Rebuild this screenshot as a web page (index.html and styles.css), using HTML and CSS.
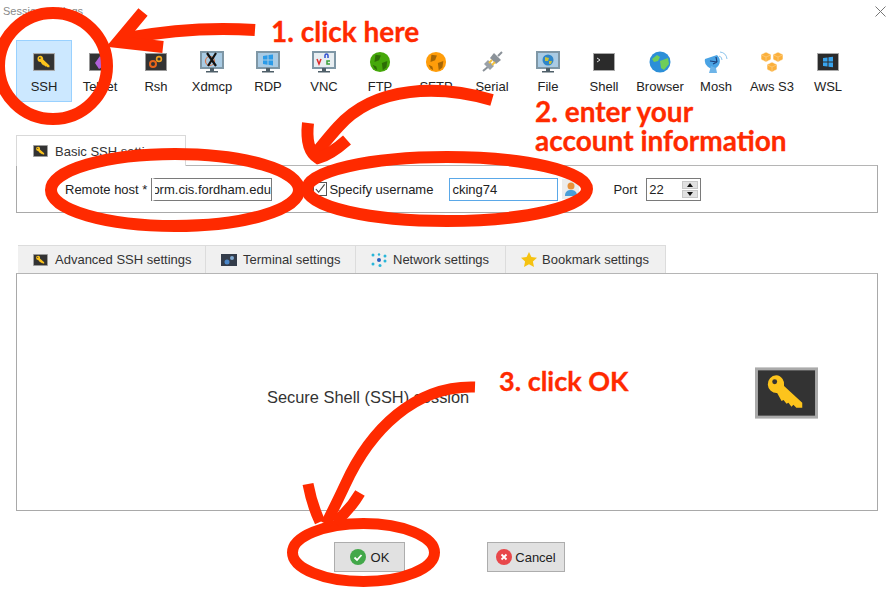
FILE: index.html
```html
<!DOCTYPE html>
<html lang="en">
<head>
    <meta charset="UTF-8">
    <title>Session settings</title>
    <link rel="stylesheet" href="styles.css">
</head>
<body>
    <svg class="defs" width="0" height="0">
        <symbol id="ic-key" viewBox="0 0 64 52">
            <rect x="1.500" y="1.500" width="61" height="49" fill="#333" stroke="#aaa" stroke-width="3"/>
            <path d="M21.500 8a9 9 0 018 11l18.500 17v5h-6l-3-3-2 2-3-4-2 1-3-4-2 1-4.500-8a9 9 0 01-1-18z" fill="#fdc41c"/>
            <circle cx="20" cy="14.500" r="2.500" fill="#333"/>
        </symbol>
        <symbol id="ic-monitor" viewBox="0 0 24 24">
            <rect x="1" y="2" width="22" height="16" fill="#a9cbe4" stroke="#7f97a6" stroke-width="2"/>
            <path d="M10 18h4v3h-4zM6 21h12v1.500H6z" fill="#4f5f69"/>
        </symbol>
        <symbol id="ic-globe" viewBox="0 0 24 24">
            <circle cx="12" cy="12" r="11"/>
            <path d="M7 4l6 1-2 5-5 2zM14 13l6-2-1 7-4 3zM4 15l4 2 1 4-3-2z" fill="#000" opacity=".35"/>
        </symbol>
    </svg>

    <div class="dialog">
        <div class="titlebar">
            <span class="title">Session settings</span>
            <svg class="close" width="11" height="11" viewBox="0 0 11 11"><path d="M.5.5l10 10M10.500.5l-10 10" stroke="#777" fill="none"/></svg>
        </div>

        <div class="toolbar">
            <div class="tool active">
                <svg width="22" height="18"><use href="#ic-key"/></svg>
                <span>SSH</span>
            </div>
            <div class="tool">
                <svg width="22" height="18" viewBox="0 0 22 18"><rect x=".5" y=".5" width="21" height="17" fill="#333" stroke="#999"/><path d="M6 10l5-7 4 3v7l-5 3z" fill="#b060d8"/></svg>
                <span>Telnet</span>
            </div>
            <div class="tool">
                <svg width="22" height="18" viewBox="0 0 22 18"><rect x=".5" y=".5" width="21" height="17" fill="#333" stroke="#999"/><circle cx="8" cy="11" r="3" fill="none" stroke="#e8641c" stroke-width="2"/><circle cx="14" cy="6" r="2.400" fill="none" stroke="#f0a020" stroke-width="1.600"/></svg>
                <span>Rsh</span>
            </div>
            <div class="tool">
                <svg width="24" height="24"><use href="#ic-monitor"/><circle cx="10" cy="11" r="4.500" fill="none" stroke="#d9764a" stroke-width="1.200"/><path d="M7 3l9 13M16 3L8 16" stroke="#111" stroke-width="2.200"/></svg>
                <span>Xdmcp</span>
            </div>
            <div class="tool">
                <svg width="24" height="24"><use href="#ic-monitor"/><path d="M7 6l4.500-.7v4.200H7zM12.500 5.100L17 4.500v5h-4.500zM7 10.500h4.500v4.200L7 14zM12.500 10.500H17v5l-4.500-.7z" fill="#2b9be8"/></svg>
                <span>RDP</span>
            </div>
            <div class="tool">
                <svg width="24" height="24"><use href="#ic-monitor"/><rect x="2" y="3" width="20" height="14" fill="#e8eef2"/><path d="M5 9l2 5 2-5" fill="none" stroke="#e02a2a" stroke-width="1.500"/><path d="M18 11h-3v3h3" fill="none" stroke="#3aa03a" stroke-width="1.500"/><path d="M13 8V5.500a1.500 1.500 0 013 0V8" fill="none" stroke="#3050d0" stroke-width="1.500"/></svg>
                <span>VNC</span>
            </div>
            <div class="tool">
                <svg class="green" width="22" height="22"><use href="#ic-globe"/></svg>
                <span>FTP</span>
            </div>
            <div class="tool">
                <svg class="orange" width="22" height="22"><use href="#ic-globe"/></svg>
                <span>SFTP</span>
            </div>
            <div class="tool">
                <svg width="24" height="24" viewBox="0 0 24 24"><path d="M14 3l7 7-5 4-6-6z" fill="#8b9299"/><path d="M3 21l6-5M18 6l4-4" stroke="#8b9299" stroke-width="2"/><path d="M4 14l6 6 4-4-6-6z" fill="#9aa1a8"/><path d="M9 13l3-3M12 15l3-3" stroke="#f3c13a" stroke-width="2"/></svg>
                <span>Serial</span>
            </div>
            <div class="tool">
                <svg width="24" height="24"><use href="#ic-monitor"/><circle cx="12" cy="10" r="5.500" fill="#2f86c9"/><path d="M9 7l4 1-1 3-3 0zM13 11l3 0-1 3-2 0z" fill="#c9c23a"/></svg>
                <span>File</span>
            </div>
            <div class="tool">
                <svg width="22" height="18" viewBox="0 0 22 18"><rect x=".5" y=".5" width="21" height="17" fill="#2b2b2b" stroke="#aaa"/><path d="M4 5l3 2-3 2" fill="none" stroke="#ddd"/></svg>
                <span>Shell</span>
            </div>
            <div class="tool">
                <svg width="22" height="22" viewBox="0 0 22 22"><circle cx="11" cy="11" r="10.500" fill="#2c8fd8"/><path d="M3 8l5-4 3 2-2 4-4 1zM11 10l8-3 1 6-5 6-3-2z" fill="#6fce5a"/></svg>
                <span>Browser</span>
            </div>
            <div class="tool">
                <svg width="24" height="24" viewBox="0 0 24 24"><path d="M1 9L13 5a8 8 0 01-1 13 8 8 0 01-11-9z" fill="#4aa3e4"/><path d="M5 23l2-7 5 2 1 5z" fill="#6db4e8"/><path d="M6 11l7 1M13 12l-1-5M9 14l4-2" stroke="#1d3f7a" stroke-width="1.200" fill="none"/><path d="M15 6a4 4 0 013 4M16 2a8 8 0 017 7" stroke="#8cc4ec" fill="none"/></svg>
                <span>Mosh</span>
            </div>
            <div class="tool">
                <svg width="24" height="22" viewBox="0 0 24 22"><path d="M6 1l5 2.500v5L6 11 1 8.500v-5zM18 1l5 2.500v5L18 11l-5-2.500v-5zM12 11l5 2.500v5L12 21l-5-2.500v-5z" fill="#fbb03b" stroke="#fff" stroke-width=".6"/><path d="M1.500 4L6 6l4.500-2M13.500 4L18 6l4.500-2M7.500 14l4.500 2 4.500-2M6 6v5M18 6v5M12 16v5" stroke="#fdd08a" stroke-width=".7" fill="none"/></svg>
                <span>Aws S3</span>
            </div>
            <div class="tool">
                <svg width="22" height="18" viewBox="0 0 22 18"><rect x=".5" y=".5" width="21" height="17" fill="#2b2b2b" stroke="#aaa"/><path d="M6 5l4.500-.6v4H6zM11.500 4.300L16 3.700v4.700h-4.500zM6 9.500h4.500v4L6 13zM11.500 9.500H16v4.800l-4.500-.6z" fill="#38a3ec"/></svg>
                <span>WSL</span>
            </div>
        </div>

        <div class="tabs first-tabs">
            <div class="tab current">
                <svg width="15" height="12"><use href="#ic-key"/></svg>
                Basic SSH settings
            </div>
        </div>
        <div class="panel basic">
            <label class="host-label">Remote host *</label>
            <div class="field host">orm.cis.fordham.edu</div>
            <span class="check"><svg width="12" height="12" viewBox="0 0 13 13"><path d="M2 6.500l3 3.500L11.500 1.500" fill="none" stroke="#444" stroke-width="1.200"/></svg></span>
            <label class="user-label">Specify username</label>
            <div class="field user">cking74</div>
            <svg class="user-icon" width="17" height="20" viewBox="0 0 17 20"><rect width="17" height="20" fill="#ececec"/><circle cx="9" cy="7" r="3.500" fill="#e8913a"/><path d="M3 17c0-5 3-6 6-6s6 1 6 6z" fill="#4a9ed8"/></svg>
            <label class="port-label">Port</label>
            <div class="field port">
                22
                <div class="spin">
                    <span class="up"></span>
                    <span class="down"></span>
                </div>
            </div>
        </div>

        <div class="tabs second-tabs">
            <div class="tab w-adv">
                <svg width="15" height="12"><use href="#ic-key"/></svg>
                Advanced SSH settings
            </div>
            <div class="tab w-term">
                <svg width="16" height="12" viewBox="0 0 16 12"><rect width="16" height="12" fill="#333c4a"/><circle cx="6" cy="8" r="2.500" fill="#4a86c8"/><circle cx="11" cy="4" r="2" fill="#7fa8d0"/></svg>
                Terminal settings
            </div>
            <div class="tab w-net">
                <svg width="16" height="14" viewBox="0 0 16 14"><circle cx="8" cy="7" r="2" fill="#2a5fc0"/><g fill="#29b6d8"><circle cx="2" cy="2" r="1.500"/><circle cx="8" cy="1.500" r="1.200"/><circle cx="14" cy="3" r="1.500"/><circle cx="14" cy="8" r="1.500"/><circle cx="2" cy="11" r="1.500"/><circle cx="9" cy="12.500" r="1.500"/></g></svg>
                Network settings
            </div>
            <div class="tab w-book">
                <svg width="16" height="15" viewBox="0 0 16 15"><path d="M8 0l2.400 5 5.600.7-4.100 3.800 1.100 5.500L8 12.300 3 15l1.100-5.500L0 5.700 5.600 5z" fill="#f5c211"/></svg>
                Bookmark settings
            </div>
        </div>
        <div class="panel content">
            <div class="session-name">Secure Shell (SSH) session</div>
            <svg class="big-key" width="63" height="52"><use href="#ic-key"/></svg>
        </div>

        <div class="footer">
            <div class="btn ok">
                <svg width="16" height="16" viewBox="0 0 16 16"><circle cx="8" cy="8" r="8" fill="#43a84a"/><path d="M4.500 8.500l2.500 2.500 4.500-5" fill="none" stroke="#fff" stroke-width="1.800"/></svg>
                OK
            </div>
            <div class="btn cancel">
                <svg width="16" height="16" viewBox="0 0 16 16"><circle cx="8" cy="8" r="8" fill="#e8474a"/><path d="M5.500 5.500l5 5M10.500 5.500l-5 5" fill="none" stroke="#fff" stroke-width="1.800"/></svg>
                Cancel
            </div>
        </div>
    </div>

    <!-- red marks drawn on top of the screenshot -->
    <svg class="marks" width="892" height="600" viewBox="0 0 892 600">
        <g fill="none" stroke="#ff2a00" stroke-width="12">
            <ellipse cx="53" cy="66" rx="54" ry="53"/>
            <path d="M255 30C210 27 170 30 127 38"/>
            <path d="M143 12L118 42L163 47"/>
            <ellipse cx="175" cy="190" rx="124" ry="36"/>
            <ellipse cx="447" cy="189" rx="140" ry="32"/>
            <path d="M492 100C440 85 375 85 338 127C328 138 322 146 316 153"/>
            <path d="M308 123Q305 150 318 158Q330 155 347 140"/>
            <ellipse cx="363.500" cy="552.500" rx="71" ry="29" stroke-width="11"/>
            <path d="M475 387C415 385 370 430 345 485C338 500 332 512 326 524" stroke-width="11"/>
            <path d="M308 484Q312 505 320 522M360 493Q350 510 335 522" stroke-width="11"/>
        </g>
    </svg>
    <div class="note note-1">1. click here</div>
    <div class="note note-2">2. enter your<br>account information</div>
    <div class="note note-3">3. click OK</div>
</body>
</html>
```

FILE: styles.css
```css
*,
*::before,
*::after {
    box-sizing: border-box;
}
body {
    margin: 0;
    width: 892px;
    height: 600px;
    overflow: hidden;
    position: relative;
    background: #fff;
    color: #222;
    font-family: "Liberation Sans", Arial, sans-serif;
    font-size: 13px;
}
.defs {
    position: absolute;
}
.green { fill: #46a80a; }
.orange { fill: #ff9d0a; }

.dialog {
    display: flex;
    flex-direction: column;
    padding: 0 14px 0 16px;
}
.titlebar {
    height: 40px;
    display: flex;
    justify-content: space-between;
    align-items: flex-start;
    margin-left: -13px;
    margin-right: -8px;
    padding-top: 5px;
}
.title {
    font-size: 11px;
    color: #8a8a8a;
}
.close {
    margin-top: 1px;
}

.toolbar {
    display: flex;
    height: 62px;
}
.tool {
    width: 56px;
    display: flex;
    flex-direction: column;
    align-items: center;
    padding: 6px 0;
    border: 1px solid transparent;
    white-space: nowrap;
}
.tool svg {
    margin: auto 0;
}
.tool span {
    line-height: 16px;
    margin-top: 3px;
}
.tool.active {
    background: #cce8ff;
    border-color: #99d1ff;
}

.tabs {
    display: flex;
}
.first-tabs {
    margin-top: 33px;
    margin-bottom: -1px;
    position: relative;
    z-index: 1;
}
.second-tabs {
    margin-top: 32px;
    padding-left: 2px;
}
.tab {
    display: flex;
    align-items: center;
    gap: 7px;
    height: 28px;
    padding-left: 15px;
    background: #f0f0f0;
    border: 1px solid #dcdcdc;
    border-bottom: 0;
    border-left: 0;
    color: #333;
}
.tab.current {
    width: 170px;
    height: 31px;
    background: #fff;
    border: 1px solid #d9d9d9;
    border-bottom: 0;
    padding-left: 16px;
}
.w-adv { width: 188px; }
.w-term { width: 150px; gap: 6px; }
.w-net { width: 150px; gap: 6px; }
.w-book { width: 160px; gap: 5px; }

.panel {
    border: 1px solid #a9a9a9;
    border-top-color: #b5b5b5;
    display: flex;
    align-items: center;
}
.basic {
    height: 48px;
    padding-left: 48px;
}
.field {
    height: 23px;
    line-height: 21px;
    background: #fff;
    border: 1px solid #7a7a7a;
    padding-left: 2px;
    white-space: nowrap;
    overflow: hidden;
}
.host {
    width: 120px;
    margin-left: 5px;
    padding-left: 0;
    border-left: 3px solid #fff;
    box-shadow: -1px 0 0 #7a7a7a;
    text-indent: -3px;
}
.check {
    width: 14px;
    height: 14px;
    margin-left: 41px;
    border: 1px solid #555;
    display: flex;
}
.user-label {
    margin-left: 2px;
}
.user {
    width: 109px;
    margin-left: 16px;
    border-color: #5aa8e8;
}
.user-icon {
    margin-left: 4px;
}
.port-label {
    margin-left: 34px;
}
.port {
    width: 55px;
    margin-left: 9px;
    display: flex;
    justify-content: space-between;
    padding-right: 2px;
}
.spin {
    width: 16px;
    display: flex;
    flex-direction: column;
    gap: 1px;
    padding-top: 2px;
}
.spin span {
    height: 8px;
    background: #e1e1e1;
    border: 1px solid #c8c8c8;
    display: flex;
    justify-content: center;
    align-items: center;
}
.spin span::before {
    content: "";
    border-left: 3px solid transparent;
    border-right: 3px solid transparent;
}
.up::before {
    border-bottom: 4px solid #111;
}
.down::before {
    border-top: 4px solid #111;
}

.content {
    height: 238px;
    padding: 0 59px 0 250px;
    justify-content: space-between;
}
.session-name {
    font-size: 16.4px;
    margin-top: 10px;
    color: #333;
}
.big-key {
    margin-top: 2px;
}

.footer {
    display: flex;
    margin-top: 31px;
    padding-left: 318px;
    gap: 82px;
}
.btn {
    height: 30px;
    display: flex;
    align-items: center;
    justify-content: center;
    gap: 3px;
    background: #e1e1e1;
    border: 1px solid #adadad;
}
.ok { width: 71px; gap: 5px; }
.cancel { width: 78px; }

.marks {
    position: absolute;
    left: 0;
    top: 0;
    z-index: 2;
}
.note {
    position: absolute;
    z-index: 3;
    color: #ff2a00;
    font-family: Lato, "Open Sans", sans-serif;
    font-weight: 700;
    font-size: 28px;
    line-height: 29px;
    white-space: nowrap;
    -webkit-text-stroke: 0.3px #ff2a00;
}
.note-1 { left: 271px; top: 17px; }
.note-2 { left: 535px; top: 97px; }
.note-3 { left: 499px; top: 366px; font-size: 27px; }
```
